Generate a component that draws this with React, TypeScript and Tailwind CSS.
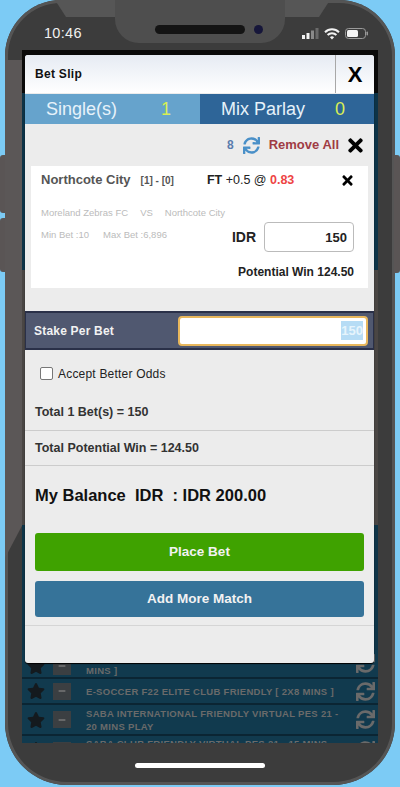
import { FaMinus, FaStar, FaSync, FaTimes } from "react-icons/fa";

const rows = [
  { title: "MINS ]", h: "h-[29px]", first: true },
  { title: "E-SOCCER F22 ELITE CLUB FRIENDLY [ 2X8 MINS ]", h: "h-[26px]", first: false },
  { title: "SABA INTERNATIONAL FRIENDLY VIRTUAL PES 21 - 20 MINS PLAY", h: "h-[31px]", first: false },
  { title: "SABA CLUB FRIENDLY VIRTUAL PES 21 - 15 MINS PLAY", h: "h-[30px]", first: false },
];

const StatusIcons = () => (
  <div className="flex items-center gap-[5px]">
    <svg width="17" height="11" viewBox="0 0 17 11">
      <rect x="0" y="7" width="3" height="4" fill="#f2f2f2" />
      <rect x="4.5" y="5" width="3" height="6" fill="#f2f2f2" />
      <rect x="9" y="2.5" width="3" height="8.5" fill="#8a8a8a" />
      <rect x="13.5" y="0" width="3" height="11" fill="#6a6a6a" />
    </svg>
    <svg width="16" height="12" viewBox="0 0 16 12" fill="none" stroke="#f2f2f2" strokeWidth="2">
      <path d="M1 4.2a10 10 0 0 1 14 0" />
      <path d="M3.6 7a6.2 6.2 0 0 1 8.8 0" />
      <path d="M8 11.5 5.9 9.3a3 3 0 0 1 4.2 0Z" fill="#f2f2f2" stroke="none" />
    </svg>
    <svg width="23" height="11" viewBox="0 0 23 11">
      <rect x="0.5" y="0.5" width="20" height="10" rx="3" fill="none" stroke="#9a9a9a" />
      <rect x="2" y="2" width="11" height="7" rx="1.5" fill="#f5f5f5" />
      <rect x="21.5" y="3.5" width="1.5" height="4" rx="0.7" fill="#9a9a9a" />
    </svg>
  </div>
);

export default function App() {
  return (
    <div className="h-[787px] w-[400px] overflow-hidden bg-[#7ccbf5] font-['Liberation_Sans',Arial,sans-serif]">
      <div className="relative mx-[5px] flex h-[785px] w-[390px] flex-col rounded-b-[62px] rounded-t-[56px] bg-[#3c3c3c] shadow-[inset_0_0_0_3px_#555555]">
        {/* side buttons */}
        <div className="absolute -left-[5px] top-[155px] h-[58px] w-[6px] rounded-l-[3px] bg-[#5a5555]" />
        <div className="absolute -left-[5px] top-[218px] h-[54px] w-[6px] rounded-l-[3px] bg-[#5a5555]" />
        <div className="absolute -right-[5px] top-[155px] h-[118px] w-[6px] rounded-r-[3px] bg-[#5a5555]" />
        {/* reflections on the case */}
        <div className="absolute left-[50px] top-0 h-[17px] w-[275px] bg-[#565656] [clip-path:polygon(0_0,100%_0,96%_100%,4%_100%)]" />
        <div className="absolute left-0 top-[60px] h-[498px] w-[17px] bg-[#5b5757] [clip-path:polygon(0_0,100%_0,100%_93.5%,0_100%)]" />

        {/* status bar */}
        <div className="relative flex h-[50px] shrink-0 items-center justify-between pl-[39px] pr-[27px] pt-[17px]">
          <span className="text-[14.5px] font-medium tracking-[0.3px] text-[#f0f0f0]">10:46</span>
          <div className="absolute left-[110px] top-0 flex h-[43px] w-[170px] items-start justify-center gap-[9px] rounded-b-[24px] bg-[#4e4e4e] pt-[25px]">
            <div className="ml-[18px] h-[9px] w-[90px] rounded-full bg-[#141414]" />
            <div className="h-[9px] w-[9px] rounded-full bg-[#16163a]" />
          </div>
          <StatusIcons />
        </div>

        {/* screen behind the slip */}
        <div className="relative mx-[17px] flex h-[693px] shrink-0 flex-col overflow-hidden">
          <div className="h-[43px] shrink-0 bg-[#0a0a0a]" />
          <div className="h-[177px] shrink-0 bg-[#0d3347]" />
          <div className="h-[255px] shrink-0 bg-[#4a4644]" />
          <div className="h-[125px] shrink-0 bg-[#0f3548]" />
          {rows.map((row) => (
            <div
              key={row.title}
              className={`${row.h} flex shrink-0 items-center overflow-hidden border-b-2 border-[#0b2533] bg-[#113a4e] pl-[5px] pr-[3px]`}
            >
              <FaStar className={`h-[18px] w-[18px] shrink-0 text-[#141a1e] ${row.first ? "mt-[5px]" : ""}`} />
              <div className={`ml-[8px] flex h-[17px] w-[18px] shrink-0 items-center justify-center bg-[#3b3f42] ${row.first ? "mt-[5px]" : ""}`}>
                <FaMinus className="h-[8px] w-[8px] text-[#777]" />
              </div>
              <span className={`ml-[15px] flex-1 text-[9.5px] font-bold leading-[13px] tracking-[0.3px] text-[#6a6a6a] ${row.first ? "self-end" : ""}`}>
                {row.title}
              </span>
              <FaSync className="ml-[8px] h-[19px] w-[19px] shrink-0 text-[#6a6a6a]" />
            </div>
          ))}
        </div>

        {/* home indicator */}
        <div className="flex flex-1 items-start justify-center pt-[20px]">
          <div className="h-[5px] w-[130px] rounded-full bg-white" />
        </div>

        {/* bet slip */}
        <div className="absolute left-[20px] top-[55px] flex h-[608px] w-[349px] flex-col rounded-[3px] bg-[#ececec] text-[#222] shadow-[0_1px_1px_#000000]">
          <div className="flex h-[38px] shrink-0 items-center rounded-t-[3px] bg-gradient-to-b from-[#e6ebf3] to-[#ffffff]">
            <span className="flex-1 pl-[10px] text-[12px] font-bold tracking-[0.3px] text-[#111]">Bet Slip</span>
            <div className="flex h-full w-[39px] items-center justify-center border-l border-[#a8a8a8] text-[22px] font-bold text-black">
              X
            </div>
          </div>

          <div className="mt-[1px] flex h-[30px] shrink-0 text-[18px] text-[#e6f2fa]">
            <div className="flex w-[175px] items-center bg-[#66a3cc] pl-[21px]">
              <span className="flex-1">Single(s)</span>
              <span className="pr-[29px] text-[#d9ee55]">1</span>
            </div>
            <div className="flex flex-1 items-center bg-[#2e6598] pl-[21px]">
              <span className="flex-1">Mix Parlay</span>
              <span className="pr-[29px] text-[#d9ee55]">0</span>
            </div>
          </div>

          <div className="flex h-[42px] shrink-0 items-center justify-end pr-[10px]">
            <span className="text-[12px] font-bold text-[#5a7cae]">8</span>
            <FaSync className="ml-[9px] h-[17px] w-[17px] text-[#4a90c8]" />
            <span className="ml-[9px] text-[13px] font-bold text-[#a03c44]">Remove All</span>
            <FaTimes className="ml-[8px] h-[21px] w-[17px] text-black" />
          </div>

          <div className="mx-[6px] h-[122px] shrink-0 bg-white pl-[10px] pr-[14px]">
            <div className="flex h-[28px] items-center">
              <span className="text-[13px] font-bold text-[#555]">Northcote City</span>
              <span className="ml-[10px] text-[10px] font-bold text-[#555]">[1] - [0]</span>
              <span className="ml-[33px] text-[12.5px] text-[#222]">
                <b>FT</b> +0.5 @ <b className="text-[#ee4444]">0.83</b>
              </span>
              <FaTimes className="ml-auto h-[15px] w-[13px] text-black" />
            </div>
            <div className="mt-[12px] flex gap-[12px] text-[9.5px] text-[#bbb]">
              <span>Moreland Zebras FC</span>
              <span>VS</span>
              <span>Northcote City</span>
            </div>
            <div className="mt-[2px] flex h-[30px] items-center text-[9.5px] text-[#bbb]">
              <span className="-mt-[5px]">Min Bet :10</span>
              <span className="-mt-[5px] ml-[14px]">Max Bet :6,896</span>
              <span className="ml-auto text-[14px] font-bold text-[#222]">IDR</span>
              <div className="ml-[8px] flex h-[30px] w-[90px] items-center justify-end rounded-[4px] border border-[#bbb] bg-white pr-[6px] text-[13px] font-bold text-[#222]">
                150
              </div>
            </div>
            <p className="mt-[11px] text-right text-[12px] font-bold text-[#222]">Potential Win 124.50</p>
          </div>

          <div className="mt-[23px] flex h-[39px] shrink-0 items-center justify-between border-x border-y-2 border-[#2a3048] bg-[#505870] pl-[8px] pr-[5px]">
            <span className="text-[12px] font-bold tracking-[0.2px] text-[#f2f2f2]">Stake Per Bet</span>
            <div className="flex h-[30px] w-[190px] items-center justify-end rounded-[4px] border-2 border-[#e8b75c] bg-white pr-[3px]">
              <span className="bg-[#b6dcf5] text-[13px] font-bold text-[#e6f4fc]">150</span>
            </div>
          </div>

          <label className="mt-[16px] flex h-[15px] shrink-0 items-center pl-[15px] text-[12px] tracking-[0.2px] text-[#222]">
            <span className="h-[13px] w-[13px] rounded-[2px] border border-[#777] bg-white" />
            <span className="ml-[5px]">Accept Better Odds</span>
          </label>

          <div className="mt-[14px] flex h-[36px] shrink-0 items-center border-b border-[#ccc] pl-[10px] text-[12.5px] font-bold text-[#333]">
            Total 1 Bet(s) = 150
          </div>
          <div className="flex h-[35px] shrink-0 items-center border-b border-[#ccc] pl-[10px] text-[12.5px] font-bold text-[#333]">
            Total Potential Win = 124.50
          </div>

          <p className="mt-[19px] whitespace-pre pl-[10px] text-[16.5px] font-bold leading-[20px] text-[#111]">
            My Balance  IDR  : IDR 200.00
          </p>

          <div className="mx-[10px] mt-[28px] flex h-[38px] shrink-0 items-center justify-center rounded-[3px] bg-[#3fa200] text-[13.5px] font-bold text-[#f2f2f2]">
            Place Bet
          </div>
          <div className="mx-[10px] mt-[10px] flex h-[36px] shrink-0 items-center justify-center rounded-[3px] bg-[#367399] text-[13.5px] font-bold text-[#f2f2f2]">
            Add More Match
          </div>
          <div className="mt-[8px] border-b border-[#d5d5d5]" />
        </div>
      </div>
    </div>
  );
}
